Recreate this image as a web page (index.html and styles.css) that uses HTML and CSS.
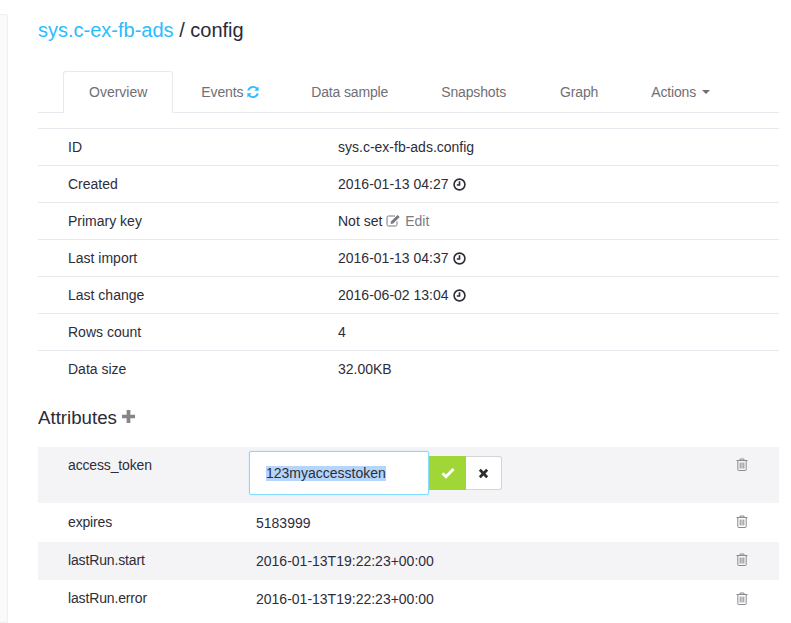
FILE: index.html
```html
<!DOCTYPE html>
<html lang="en">
<head>
<meta charset="utf-8">
<title>sys.c-ex-fb-ads / config</title>
<link rel="stylesheet" href="styles.css">
</head>
<body>
<div class="page">
  <aside class="side"></aside>
  <main class="content">
    <h1 class="title"><a class="link">sys.c-ex-fb-ads</a> / config</h1>
    <nav class="tabs">
      <a class="tab active">Overview</a>
      <a class="tab">Events <svg class="ic-refresh" viewBox="0 0 14 14"><path d="M12.6 1.4v4.3H8.3l1.7-1.7A4 4 0 0 0 3.4 5.4H1.2A6.1 6.1 0 0 1 11.3 2.7zM1.4 12.6V8.3h4.3L4 10a4 4 0 0 0 6.6-1.4h2.2a6.1 6.1 0 0 1-10.100 2.700z"/></svg></a>
      <a class="tab">Data sample</a>
      <a class="tab">Snapshots</a>
      <a class="tab">Graph</a>
      <a class="tab">Actions <span class="caret"></span></a>
    </nav>
    <div class="info">
      <div class="row"><span class="key">ID</span><span>sys.c-ex-fb-ads.config</span></div>
      <div class="row"><span class="key">Created</span><span>2016-01-13 04:27 <svg class="ic-clock" viewBox="0 0 12 12"><circle cx="6" cy="6" r="5"/><path d="M6 3V6.500H3.500"/></svg></span></div>
      <div class="row"><span class="key">Primary key</span><span>Not set <svg class="ic-edit" viewBox="0 0 15 13"><path d="M11 7.500v3a1.500 1.500 0 0 1-1.500 1.500h-7A1.500 1.500 0 0 1 1 10.500v-7A1.500 1.500 0 0 1 2.500 2H9"/><path class="fill" d="M5 7.500 11.500.9l2.200 2.200L7.200 9.600 4.700 10z"/></svg> <span class="muted">Edit</span></span></div>
      <div class="row"><span class="key">Last import</span><span>2016-01-13 04:37 <svg class="ic-clock" viewBox="0 0 12 12"><circle cx="6" cy="6" r="5"/><path d="M6 3V6.500H3.500"/></svg></span></div>
      <div class="row"><span class="key">Last change</span><span>2016-06-02 13:04 <svg class="ic-clock" viewBox="0 0 12 12"><circle cx="6" cy="6" r="5"/><path d="M6 3V6.500H3.500"/></svg></span></div>
      <div class="row"><span class="key">Rows count</span><span>4</span></div>
      <div class="row"><span class="key">Data size</span><span>32.00KB</span></div>
    </div>
    <h2 class="subtitle">Attributes <svg class="ic-plus" viewBox="0 0 14 14"><path d="M5 0h4v5h5v4H9v5H5V9H0V5h5z"/></svg></h2>
    <div class="attrs">
      <div class="attr shaded editing">
        <span class="name">access_token</span>
        <div class="editor">
          <div class="field"><span class="sel">123myaccesstoken</span></div>
          <button class="ok"><svg viewBox="0 0 14 12"><path d="M1.500 6.200 5 9.700l7.500-7.700"/></svg></button>
          <button class="no"><svg viewBox="0 0 12 12"><path d="M2 2l8 8M10 2l-8 8"/></svg></button>
        </div>
        <svg class="ic-trash" viewBox="0 0 12 13"><path d="M.5 2.500h11M4 2.500V1h4v1.500M1.800 2.500v9.300a.7.7 0 0 0 .7.700h7a.7.7 0 0 0 .7-.7V2.500M4.200 4.500v6M6 4.500v6M7.800 4.500v6"/></svg>
      </div>
      <div class="attr tall">
        <span class="name">expires</span><span class="val">5183999</span>
        <svg class="ic-trash low" viewBox="0 0 12 13"><path d="M.5 2.500h11M4 2.500V1h4v1.500M1.800 2.500v9.300a.7.7 0 0 0 .7.700h7a.7.7 0 0 0 .7-.7V2.500M4.200 4.500v6M6 4.500v6M7.800 4.500v6"/></svg>
      </div>
      <div class="attr shaded">
        <span class="name">lastRun.start</span><span class="val">2016-01-13T19:22:23+00:00</span>
        <svg class="ic-trash" viewBox="0 0 12 13"><path d="M.5 2.500h11M4 2.500V1h4v1.500M1.800 2.500v9.300a.7.7 0 0 0 .7.700h7a.7.7 0 0 0 .7-.7V2.500M4.200 4.500v6M6 4.500v6M7.800 4.500v6"/></svg>
      </div>
      <div class="attr">
        <span class="name">lastRun.error</span><span class="val">2016-01-13T19:22:23+00:00</span>
        <svg class="ic-trash low" viewBox="0 0 12 13"><path d="M.5 2.500h11M4 2.500V1h4v1.500M1.800 2.500v9.300a.7.7 0 0 0 .7.700h7a.7.7 0 0 0 .7-.7V2.500M4.200 4.500v6M6 4.500v6M7.800 4.500v6"/></svg>
      </div>
    </div>
  </main>
</div>
</body>
</html>
```

FILE: styles.css
```css
* { box-sizing: border-box; }
html, body { margin: 0; height: 100%; overflow: hidden; background: #fff; }
body { font-family: "Liberation Sans", Arial, sans-serif; font-size: 14px; line-height: 20px; color: #2d2d3a; }
.page { display: flex; height: 623px; }
.side { flex: 0 0 8px; margin-top: 14px; background: #fafafa; border: 1px solid #f0f0f2; border-left: 0; border-radius: 0 3px 0 0; }
.content { flex: 0 0 741px; margin-left: 30px; }
.title { margin: 18px 0 0; font-size: 20px; line-height: 25px; font-weight: 400; color: #2b2b38; }
.link { color: #2bbcff; }
.tabs { display: flex; height: 70px; padding: 28px 0 0 25px; border-bottom: 1px solid #e8e8ee; }
.tab { display: flex; align-items: center; gap: 3px; height: 41px; padding: 0 27px; color: #6f6f75; white-space: nowrap; letter-spacing: -0.15px; }
.tab:nth-child(2) { padding: 0 24px 0 28px; }
.tab:nth-child(3) { padding-right: 26px; }
.tab:nth-child(5) { padding-right: 26px; }
.active { background: #fff; border: 1px solid #e8e8ee; border-bottom-color: #fff; border-radius: 3px 3px 0 0; height: 42px; padding: 0 25px; margin-bottom: -1px; letter-spacing: 0; }
.ic-refresh { width: 14px; height: 14px; fill: #2bbcff; }
.caret { display: inline-block; margin-left: 3px; border-top: 4px solid #6f6f75; border-left: 4px solid transparent; border-right: 4px solid transparent; }
.info { margin-top: 15px; border-top: 1px solid #e8e8ee; }
.row { display: flex; height: 37px; align-items: center; padding-left: 30px; border-bottom: 1px solid #e8e8ee; }
.row:last-child { border-bottom-color: transparent; }
.key { flex: 0 0 270px; color: #2d2d3a; }
.muted { color: #7b7b82; }
.ic-clock { width: 13px; height: 13px; margin-left: 1px; vertical-align: -2px; fill: none; stroke: #2d2d3a; stroke-width: 1.500; }
.ic-edit { width: 15px; height: 13px; vertical-align: -1px; fill: none; stroke: #77777e; stroke-width: 1; }
.ic-edit .fill { fill: #77777e; stroke: none; }
.subtitle { display: flex; align-items: center; gap: 5px; margin: 17px 0 0; font-size: 18.7px; line-height: 25px; font-weight: 400; color: #2b2b38; }
.ic-plus { width: 13px; height: 13px; fill: #85858c; margin-top: -3px; }
.attrs { margin-top: 17px; }
.attr { display: flex; align-items: center; height: 38px; padding-left: 30px; position: relative; }
.tall { height: 39px; }
.shaded { background: #f4f4f7; }
.name { flex: 0 0 188px; margin-top: -2px; letter-spacing: -0.15px; }
.val { flex: 0 0 auto; }
.editing { height: 56px; align-items: flex-start; padding-top: 8px; }
.editing .name { flex-basis: 181px; margin: 0; }
.editor { display: flex; align-items: center; margin-top: -4px; }
.field { width: 180px; height: 44px; padding: 0 16px; display: flex; align-items: center; background: #fff; border: 1px solid #84dcff; border-radius: 2px; box-shadow: 0 0 2px #a9e6ff; }
.sel { background: #b5d5fb; color: #2d2d3a; line-height: 15px; }
.ok, .no { display: flex; align-items: center; justify-content: center; height: 34px; padding: 0; border: 0; }
.ok { width: 37px; background: #a1d637; }
.ok svg { width: 14px; height: 12px; fill: none; stroke: #fff; stroke-width: 3; }
.no { width: 36px; background: #fff; border: 1px solid #d5d5d5; border-left: 0; border-radius: 0 3px 3px 0; }
.no svg { width: 11px; height: 11px; fill: none; stroke: #2d2d2d; stroke-width: 3; }
.ic-trash { position: absolute; left: 698px; top: 11px; width: 12px; height: 13px; fill: none; stroke: #8a8a90; stroke-width: 1; }
.low { top: 12px; }
```
